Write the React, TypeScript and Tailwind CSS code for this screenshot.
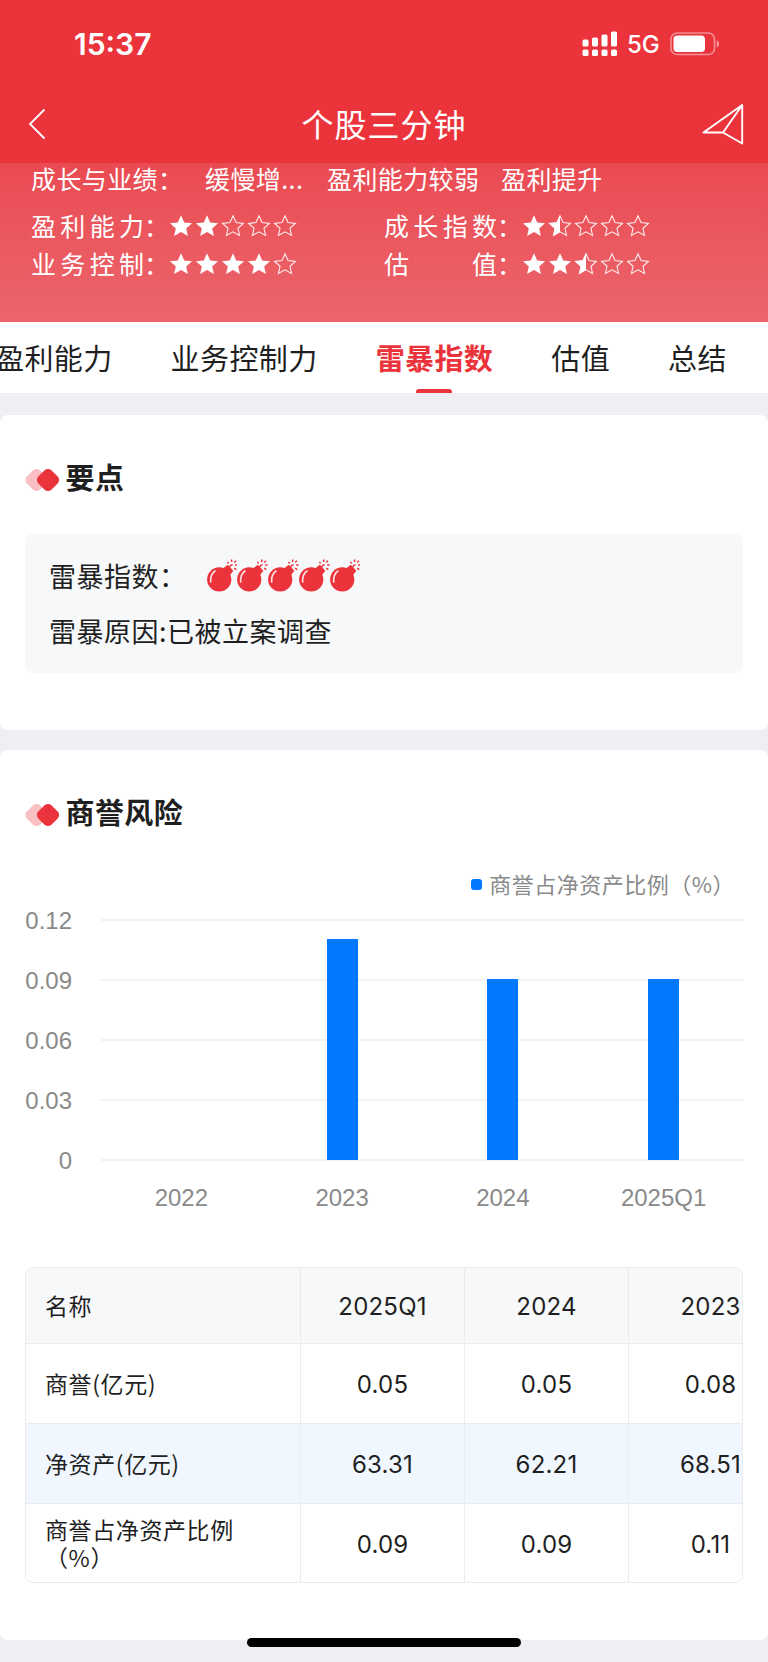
import clsx from "clsx";

const STAR = "M12 1.300l3.200 7.100 7.800.8-5.800 5.200 1.700 7.600L12 18.100 5.100 22l1.700-7.600L1 9.200l7.800-.8z";

function Star({ fill }: { fill: number }) {
  return (
    <svg viewBox="0 0 24 24" className="w-[26px] h-6 shrink-0" fill="none">
      {fill < 1 && (
        <path d={STAR} stroke="#fff" strokeOpacity="0.9" strokeWidth="1.150" transform="translate(0.600 0.600) scale(0.950)" />
      )}
      {fill === 1 && <path d={STAR} fill="#fff" />}
      {fill === 0.5 && <path d="M12 1.300v16.800L5.100 22l1.700-7.600L1 9.200l7.800-.8z" fill="#fff" />}
    </svg>
  );
}

function Rating({ label, score, className }: { label: string; score: number; className?: string }) {
  return (
    <div className={clsx("flex items-center h-[38px]", className)}>
      <div className="flex justify-between w-[113px]">
        {label.split("").map((c) => (
          <span key={c}>{c}</span>
        ))}
      </div>
      <span className="-mr-px">：</span>
      <div className="flex pt-px">
        {[0, 1, 2, 3, 4].map((i) => (
          <Star key={i} fill={Math.max(0, Math.min(1, score - i))} />
        ))}
      </div>
    </div>
  );
}

function StatusBar() {
  return (
    <div className="flex items-center h-[88px] pl-[74px] pr-12 font-['Inter',sans-serif]">
      <span className="text-[30px] font-semibold">15:37</span>
      <svg viewBox="0 0 36 26" className="w-9 h-[26px] ml-auto" fill="#fff">
        <rect x="0.5" y="8.5" width="6" height="7" rx="1.5" />
        <rect x="10" y="6.5" width="6" height="9" rx="1.5" />
        <rect x="19.5" y="3.5" width="6" height="12" rx="1.5" />
        <rect x="29" y="0.5" width="6" height="15" rx="1.5" />
        <rect x="0.5" y="18.5" width="6" height="6.5" rx="1.5" />
        <rect x="10" y="18.5" width="6" height="6.5" rx="1.5" />
        <rect x="19.5" y="18.5" width="6" height="6.5" rx="1.5" />
        <rect x="29" y="18.5" width="6" height="6.5" rx="1.5" />
      </svg>
      <span className="ml-[9px] pt-0.5 text-[24px] font-medium w-[34px] whitespace-nowrap">5G</span>
      <svg viewBox="0 0 50 24" className="w-[50px] h-6 ml-[9px]" fill="none">
        <rect x="1" y="1" width="43.5" height="21.5" rx="6" stroke="#fff" strokeOpacity="0.45" strokeWidth="1.6" />
        <rect x="3.5" y="3.5" width="31.5" height="16.5" rx="3.8" fill="#fff" />
        <path d="M46.7 8.2c1.6.7 2.4 2 2.4 3.6s-.8 2.9-2.4 3.6z" fill="#fff" fillOpacity="0.5" />
      </svg>
    </div>
  );
}

function NavBar() {
  return (
    <div className="flex items-center justify-between h-[75px] pl-7 pr-6 pb-1">
      <svg viewBox="0 0 18 32" className="w-[18px] h-8" fill="none" stroke="#fff" strokeWidth="1.8">
        <path d="M16.5 1.5L2 16l14.500 14.5" />
      </svg>
      <h1 className="text-[32px] leading-10 tracking-[1px] pl-5 pb-0.5">个股三分钟</h1>
      <svg viewBox="0 0 42 42" className="w-[42px] h-[42px]" fill="none" stroke="#fff" strokeWidth="1.9" strokeLinejoin="round">
        <path d="M40.200 2L1.500 29.500h19.500L40.200 40.500zL21 29.500" />
      </svg>
    </div>
  );
}

const tabs = ["盈利能力", "业务控制力", "雷暴指数", "估值", "总结"];

// The strip is scrolled a little, so the first tab starts off the left edge.
function Tabs() {
  return (
    <div className="h-[71px] bg-white overflow-hidden">
      <div className="flex gap-[58px] h-full -ml-[5px] whitespace-nowrap text-[29px] tracking-[0.4px]">
        {tabs.map((tab) => {
          const active = tab === "雷暴指数";
          return (
            <div
              key={tab}
              className={clsx("flex flex-col items-center justify-between h-full", active && "text-[#eb333b] font-bold")}
            >
              <span className="h-[67px] leading-[71px]">{tab}</span>
              {active && <i className="block w-9 h-1 rounded-t-[3px] bg-[#eb333b]" />}
            </div>
          );
        })}
      </div>
    </div>
  );
}

function SectionTitle({ children }: { children: string }) {
  return (
    <div className="flex items-center h-10">
      <svg viewBox="0 0 36 24" className="w-9 h-6 mt-1.5">
        <rect x="2.250" y="2.750" width="18.500" height="18.500" rx="4.800" transform="rotate(45 11.500 12)" fill="#f9bfc3" />
        <rect x="13.750" y="2.750" width="18.500" height="18.500" rx="4.800" transform="rotate(45 23 12)" fill="#eb333b" />
      </svg>
      <h2 className="ml-[4.500px] pb-[3px] text-[29px] leading-10 font-bold tracking-[0.4px]">{children}</h2>
    </div>
  );
}

function Bomb() {
  return (
    <svg viewBox="0 0 31 34" className="w-[30.800px] h-[34px]" fill="none">
      <circle cx="12.300" cy="20.500" r="12.200" fill="#eb333b" />
      <path d="M16 9.500l5-3.700 5.500 6-3.500 4.500z" fill="#eb333b" />
      <path d="M23 8q.5-2.500 2.800-2" stroke="#eb333b" strokeWidth="1.500" />
      <path d="M20.500 3l1.300 1.300M24.800.5v2.300M29 1.500l-1.500 2M28.300 6h2.500M27.300 9l2.200 1.500" stroke="#eb333b" strokeWidth="1.500" />
      <path d="M8 12q-4.800 3.300-4.300 11" stroke="#fff" strokeOpacity="0.85" strokeWidth="1.700" strokeLinecap="round" />
    </svg>
  );
}

const chart = [
  { label: "2022", value: 0 },
  { label: "2023", value: 0.11 },
  { label: "2024", value: 0.09 },
  { label: "2025Q1", value: 0.09 },
];
const ticks = ["0.12", "0.09", "0.06", "0.03", "0"];

function BarChart() {
  return (
    <div className="text-[#8a8a8a]">
      <div className="flex items-center justify-end h-8 pr-2 text-[22px] tracking-[0.500px]">
        <i className="w-[11px] h-[11px] rounded-[3px] bg-[#0078ff] mr-[7px]" />
        <span className="pb-0.5">商誉占净资产比例（%）</span>
      </div>
      <div className="flex mt-[3px] -mr-px font-['Liberation_Sans',Arial,sans-serif] text-[24px]">
        <div className="flex flex-col justify-between w-[47px] h-[274px] pt-0.5 text-right leading-8">
          {ticks.map((t) => (
            <span key={t}>{t}</span>
          ))}
        </div>
        <div className="flex-1 ml-[29px] pt-4">
          <div className="grid">
            <div className="col-start-1 row-start-1 flex flex-col justify-between h-[242px]">
              {ticks.map((t) => (
                <i key={t} className="block h-0.5 bg-[#f2f2f2]" />
              ))}
            </div>
            <div className="col-start-1 row-start-1 flex items-end h-[242px] pb-px">
              {chart.map((c) => (
                <div key={c.label} className="flex flex-1 h-full items-end justify-center">
                  <div className="w-[31px] bg-[#0078ff]" style={{ height: (c.value / 0.12) * 241 }} />
                </div>
              ))}
            </div>
          </div>
          <div className="flex mt-[21px] leading-8">
            {chart.map((c) => (
              <span key={c.label} className="flex-1 text-center">
                {c.label}
              </span>
            ))}
          </div>
        </div>
      </div>
    </div>
  );
}

const rows = [
  ["名称", "2025Q1", "2024", "2023"],
  ["商誉(亿元)", "0.05", "0.05", "0.08"],
  ["净资产(亿元)", "63.31", "62.21", "68.51"],
  ["商誉占净资产比例（%）", "0.09", "0.09", "0.11"],
];

function DataTable() {
  return (
    <div className="w-[718px] h-[316px] rounded-lg border border-[#ebecee] overflow-hidden">
      {rows.map(([name, ...values], i) => (
        <div
          key={name}
          className={clsx(
            "flex w-[768px] border-[#ebecee]",
            i === 0 ? "h-[76px] bg-[#f7f8fa]" : "h-20",
            i === 2 && "bg-[#f0f7ff]",
            i < 3 && "border-b"
          )}
        >
          <div className="flex items-center w-[274px] pl-[19px] pr-14 pb-0.5 text-[23px] leading-7 tracking-[0.600px] shrink-0">
            {name}
          </div>
          {values.map((v, j) => (
            <div
              key={j}
              className="flex items-center justify-center w-[164px] pt-0.5 shrink-0 border-l border-[#ebecee] font-['Inter',sans-serif] text-[24px] tracking-[0.200px]"
            >
              {v}
            </div>
          ))}
        </div>
      ))}
    </div>
  );
}

export default function App() {
  return (
    <div className="w-[768px] h-[1662px] overflow-hidden bg-[#efeef4] text-[#1f1f1f] font-['Noto_Sans_CJK_SC',sans-serif]">
      <header className="h-[163px] bg-[#eb333b] text-white">
        <StatusBar />
        <NavBar />
      </header>

      <section className="h-[159px] pl-[31px] text-white text-[25px] leading-[34px] bg-gradient-to-b from-[#ea4a52] to-[#ec656c]">
        <div className="flex h-8 items-end whitespace-nowrap leading-[34px] tracking-[0.400px]">
          <span className="w-[174px]">成长与业绩：</span>
          <span className="w-[122px]">缓慢增...</span>
          <span className="w-[174px]">盈利能力较弱</span>
          <span>盈利提升</span>
        </div>
        <div className="flex mt-[11px]">
          <Rating label="盈利能力" score={2} className="w-[353px]" />
          <Rating label="成长指数" score={1.5} />
        </div>
        <div className="flex">
          <Rating label="业务控制" score={4} className="w-[353px]" />
          <Rating label="估值" score={2.5} />
        </div>
      </section>

      <Tabs />

      <section className="h-[315px] mt-[22px] rounded-lg bg-white px-[25px] pt-[42px]">
        <SectionTitle>要点</SectionTitle>
        <div className="h-[139px] mt-[37px] rounded-lg bg-[#f7f8fa] pl-6 pt-3.5 text-[27px] leading-[55px] tracking-[0.500px]">
          <div className="flex items-center h-[55px]">
            <span className="w-[157.500px]">雷暴指数：</span>
            <div className="flex">
              {[0, 1, 2, 3, 4].map((i) => (
                <Bomb key={i} />
              ))}
            </div>
          </div>
          <div>雷暴原因:已被立案调查</div>
        </div>
      </section>

      <section className="h-[890px] mt-5 rounded-lg bg-white px-[25px] pt-[42px]">
        <SectionTitle>商誉风险</SectionTitle>
        <div className="mt-9">
          <BarChart />
        </div>
        <div className="mt-[53px]">
          <DataTable />
        </div>
      </section>

      <div className="relative -top-0.5 mx-auto w-[274px] h-[9px] rounded-full bg-black" />
    </div>
  );
}
